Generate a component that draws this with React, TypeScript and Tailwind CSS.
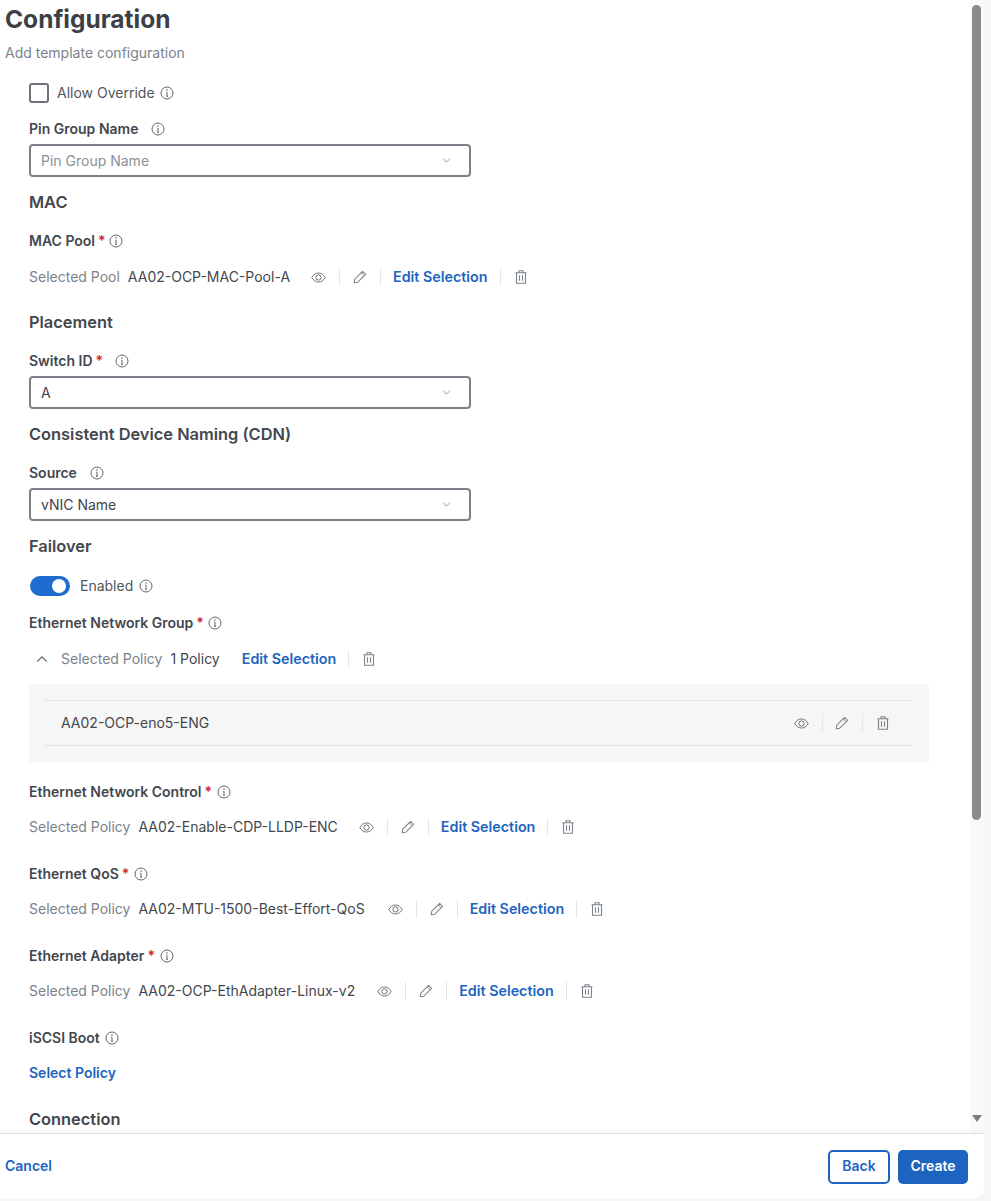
import React from 'react';
import { ChevronDown, ChevronUp } from 'lucide-react';

function InfoIcon({ className = '' }: { className?: string }) {
  return (
    <svg width="14" height="14" viewBox="0 0 14 14" fill="none" className={`shrink-0 text-[#5f6670] ${className}`}>
      <circle cx="7" cy="7" r="6" stroke="currentColor" strokeWidth="1" />
      <path d="M7 6.2V10.2M6 10.2H8M6.2 6.2H7" stroke="currentColor" strokeWidth="1" />
      <circle cx="7" cy="4" r="0.8" fill="currentColor" />
    </svg>
  );
}

function EyeIcon({ className = '' }: { className?: string }) {
  return (
    <svg width="15" height="11" viewBox="0 0 15 11" fill="none" className={`shrink-0 text-[#6c737b] ${className}`}>
      <path d="M0.8 5.5C2.4 2.6 4.7 1 7.5 1C10.3 1 12.6 2.6 14.2 5.5C12.6 8.4 10.3 10 7.5 10C4.7 10 2.4 8.4 0.8 5.5Z" stroke="currentColor" strokeWidth="1" />
      <circle cx="7.5" cy="5.5" r="2.6" stroke="currentColor" strokeWidth="1" />
    </svg>
  );
}

function PencilIcon({ className = '' }: { className?: string }) {
  return (
    <svg width="14" height="14" viewBox="0 0 14 14" fill="none" className={`shrink-0 text-[#80868e] ${className}`}>
      <path d="M1.2 12.8L1.8 9.2L9.6 1.4L12.6 4.4L4.8 12.2L1.2 12.8Z" stroke="currentColor" strokeWidth="1.1" strokeLinejoin="round" />
      <path d="M8.2 2.8L11.2 5.8" stroke="currentColor" strokeWidth="1" />
    </svg>
  );
}

function TrashIcon() {
  return (
    <svg width="12" height="14" viewBox="0 0 12 14" fill="none" className="shrink-0 text-[#7b828b]">
      <path d="M0.5 2.7H11.5M4 2.7V0.8H8V2.7M1.5 2.7V13.3H10.5V2.7M4.5 5.2V10.8M7.5 5.2V10.8" stroke="currentColor" strokeWidth="1.1" />
    </svg>
  );
}

function Divider() {
  return <span className="h-[18px] w-px bg-[#e3e5e8]" />;
}

function EditLink() {
  return <span className="text-[14.3px] font-semibold text-[#1d64c0]">Edit Selection</span>;
}

function FieldLabel({ text, required, infoClass = 'ml-[5px]' }: { text: string; required?: boolean; infoClass?: string }) {
  return (
    <div className="flex h-5 items-center text-sm font-semibold text-[#43474d]">
      <span>{text}</span>
      {required && <span className="ml-[3px] text-[#d0262d]">*</span>}
      <InfoIcon className={infoClass} />
    </div>
  );
}

function Heading({ text, className = '' }: { text: string; className?: string }) {
  return <div className={`flex h-6 items-center text-[16.4px] font-semibold text-[#43474d] ${className}`}>{text}</div>;
}

function SelectBox({ value, placeholder }: { value?: string; placeholder?: string }) {
  return (
    <div className="mt-[5px] flex h-[33px] w-[442px] items-center justify-between rounded-[4px] border-2 border-[#7b828b] pl-[10px] pr-[16px] text-sm">
      <span className={value ? 'text-[#3f4349]' : 'text-[#8a9097]'}>{value ?? placeholder}</span>
      <ChevronDown size={13} strokeWidth={1.4} className="text-[#7b828b]" />
    </div>
  );
}

function SelectedRow({ caption, value, eyeGap, rowGap }: { caption: string; value: string; eyeGap: string; rowGap: string }) {
  return (
    <div className={`flex h-5 items-center text-sm ${rowGap}`}>
      <span className="text-[#7b828b]">{caption}</span>
      <span className="ml-2 text-[#43474d]">{value}</span>
      <EyeIcon className={eyeGap} />
      <span className="ml-[13px] flex"><Divider /></span>
      <PencilIcon className="ml-[13px]" />
      <span className="ml-[13px] mr-[12px] flex"><Divider /></span>
      <EditLink />
      <span className="ml-[12px] mr-[14px] flex"><Divider /></span>
      <TrashIcon />
    </div>
  );
}

export default function App() {
  return (
    <div className="h-[1201px] w-[991px] overflow-hidden bg-[#f6f6f7] font-['Inter',sans-serif]">
      <div className="flex h-[1199px] w-[984px] flex-col overflow-hidden rounded-br-xl bg-white">
        <div className="flex min-h-0 flex-1">
          {/* scrollable form */}
          <div className="min-w-0 flex-1 overflow-hidden pl-[5px]">
            <h1 className="mt-[3px] text-[24.5px] font-bold leading-8 text-[#3c4046]">Configuration</h1>
            <p className="mt-[8px] text-sm leading-5 text-[#7b828b]">Add template configuration</p>

            <div className="pl-6">
              <div className="mt-[20px] flex h-5 items-center text-sm text-[#50555c]">
                <span className="h-5 w-5 rounded-[3px] border-2 border-[#6c737b]" />
                <span className="ml-2">Allow Override</span>
                <InfoIcon className="ml-[5px]" />
              </div>

              <div className="mt-4">
                <FieldLabel text="Pin Group Name" infoClass="ml-[13px]" />
              </div>
              <SelectBox placeholder="Pin Group Name" />

              <Heading text="MAC" className="mt-[13px]" />
              <div className="mt-[17px]">
                <FieldLabel text="MAC Pool" required infoClass="ml-[3px]" />
              </div>
              <SelectedRow caption="Selected Pool" value="AA02-OCP-MAC-Pool-A" eyeGap="ml-[21px]" rowGap="mt-4" />

              <Heading text="Placement" className="mt-[23px]" />
              <div className="mt-[17px]">
                <FieldLabel text="Switch ID" required infoClass="ml-[12px]" />
              </div>
              <SelectBox value="A" />

              <Heading text="Consistent Device Naming (CDN)" className="mt-[13px]" />
              <div className="mt-[17px]">
                <FieldLabel text="Source" infoClass="ml-[13px]" />
              </div>
              <SelectBox value="vNIC Name" />

              <Heading text="Failover" className="mt-[13px]" />
              <div className="mt-[18px] flex h-5 items-center text-sm text-[#50555c]">
                <span className="ml-px flex h-5 w-10 items-center justify-end rounded-full bg-[#1f6cd0] pr-[4px]">
                  <span className="h-[14px] w-[14px] rounded-full bg-white" />
                </span>
                <span className="ml-[10px]">Enabled</span>
                <InfoIcon className="ml-[6px]" />
              </div>

              <div className="mt-[17px]">
                <FieldLabel text="Ethernet Network Group" required infoClass="ml-[4px]" />
              </div>
              <div className="mt-4 flex h-5 items-center text-sm">
                <ChevronUp size={18} strokeWidth={1.5} className="ml-[4px] text-[#6c737b]" />
                <span className="ml-[10px] text-[#7b828b]">Selected Policy</span>
                <span className="ml-2 text-[#43474d]">1 Policy</span>
                <span className="ml-[22px] flex"><EditLink /></span>
                <span className="ml-[12px] mr-[14px] flex"><Divider /></span>
                <TrashIcon />
              </div>
              <div className="mt-[15px] flex h-[78px] w-[900px] items-center bg-[#f6f6f7] px-4">
                <div className="flex h-[46px] w-full items-center border-y border-[#e1e3e6] pl-4 pr-6 text-sm text-[#43474d]">
                  <span className="flex-1">AA02-OCP-eno5-ENG</span>
                  <EyeIcon />
                  <span className="ml-[13px] flex"><Divider /></span>
                  <PencilIcon className="ml-[12px]" />
                  <span className="ml-[13px] mr-[14px] flex"><Divider /></span>
                  <TrashIcon />
                </div>
              </div>

              <div className="mt-5">
                <FieldLabel text="Ethernet Network Control" required />
              </div>
              <SelectedRow caption="Selected Policy" value="AA02-Enable-CDP-LLDP-ENC" eyeGap="ml-[21px]" rowGap="mt-[15px]" />
              <div className="mt-[27px]">
                <FieldLabel text="Ethernet QoS" required />
              </div>
              <SelectedRow caption="Selected Policy" value="AA02-MTU-1500-Best-Effort-QoS" eyeGap="ml-[23px]" rowGap="mt-[15px]" />
              <div className="mt-[27px]">
                <FieldLabel text="Ethernet Adapter" required />
              </div>
              <SelectedRow caption="Selected Policy" value="AA02-OCP-EthAdapter-Linux-v2" eyeGap="ml-[22px]" rowGap="mt-[15px]" />
              <div className="mt-[27px]">
                <FieldLabel text="iSCSI Boot" />
              </div>
              <div className="mt-[15px] flex h-5 items-center text-sm font-semibold text-[#1d64c0]">Select Policy</div>
              <Heading text="Connection" className="mt-[24px]" />
            </div>
          </div>

          {/* scrollbar */}
          <div className="flex w-[14px] flex-col items-center bg-[#fafafa] pr-px pt-[5px]">
            <div className="h-[815px] w-[9px] rounded-full bg-[#8b8b8b]" />
            <div className="flex-1" />
            <div className="mb-[11px] h-0 w-0 border-x-[5px] border-t-[7px] border-x-transparent border-t-[#7d7d7d]" />
          </div>
        </div>

        <footer className="flex h-[66px] shrink-0 items-center justify-between border-t border-[#e1e3e6] pl-[5px] pr-4 shadow-[0_-1px_3px_rgba(0,0,0,0.06)]">
          <span className="pb-px text-sm font-semibold text-[#1d64c0]">Cancel</span>
          <div className="flex items-center gap-2">
            <span className="flex h-[34px] w-[62px] items-center justify-center rounded-[5px] border-2 border-[#1d64c0] pb-px text-sm font-semibold text-[#1d64c0]">Back</span>
            <span className="flex h-[34px] w-[70px] items-center justify-center rounded-[5px] bg-[#1d64c0] pb-px text-sm font-semibold text-white">Create</span>
          </div>
        </footer>
      </div>
    </div>
  );
}
